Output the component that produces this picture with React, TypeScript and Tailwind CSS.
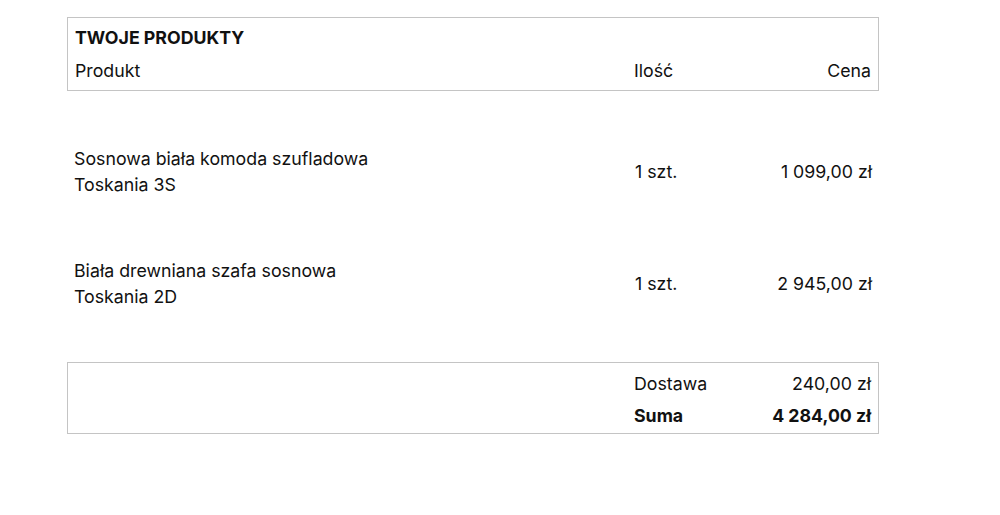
const items = [
  { name: ["Sosnowa biała komoda szufladowa", "Toskania 3S"], qty: "1 szt.", price: "1 099,00 zł" },
  { name: ["Biała drewniana szafa sosnowa", "Toskania 2D"], qty: "1 szt.", price: "2 945,00 zł" },
]

export default function App() {
  return (
    <div className="w-[1000px] h-[515px] bg-white text-[#111] text-[17.75px] leading-[24px] font-['Inter',sans-serif]">
      <div className="ml-[67px] w-[812px] pt-[17px]">
        <div className="border border-[#c4c4c4] pt-[8px] pb-[7px] pl-[7px] pr-[7px]">
          <div className="font-bold">TWOJE PRODUKTY</div>
          <div className="grid grid-cols-[1fr_120px_117px] mt-[9px]">
            <div>Produkt</div>
            <div>Ilość</div>
            <div className="text-right">Cena</div>
          </div>
        </div>

        <div className="flex flex-col gap-[60px] pt-[55px] pb-[52px] px-[7px]">
          {items.map((it, i) => (
            <div key={i} className="grid grid-cols-[1fr_120px_117px] items-center">
              <div className="leading-[26px]">
                <div>{it.name[0]}</div>
                <div>{it.name[1]}</div>
              </div>
              <div>{it.qty}</div>
              <div className="text-right">{it.price}</div>
            </div>
          ))}
        </div>

        <div className="border border-[#c4c4c4] pt-[9px] pb-[5px] px-[7px]">
          <div className="grid grid-cols-[1fr_120px_117px]">
            <div></div>
            <div>Dostawa</div>
            <div className="text-right">240,00 zł</div>
          </div>
          <div className="grid grid-cols-[1fr_120px_117px] mt-[8px] font-bold">
            <div></div>
            <div>Suma</div>
            <div className="text-right">4 284,00 zł</div>
          </div>
        </div>
      </div>
    </div>
  )
}
